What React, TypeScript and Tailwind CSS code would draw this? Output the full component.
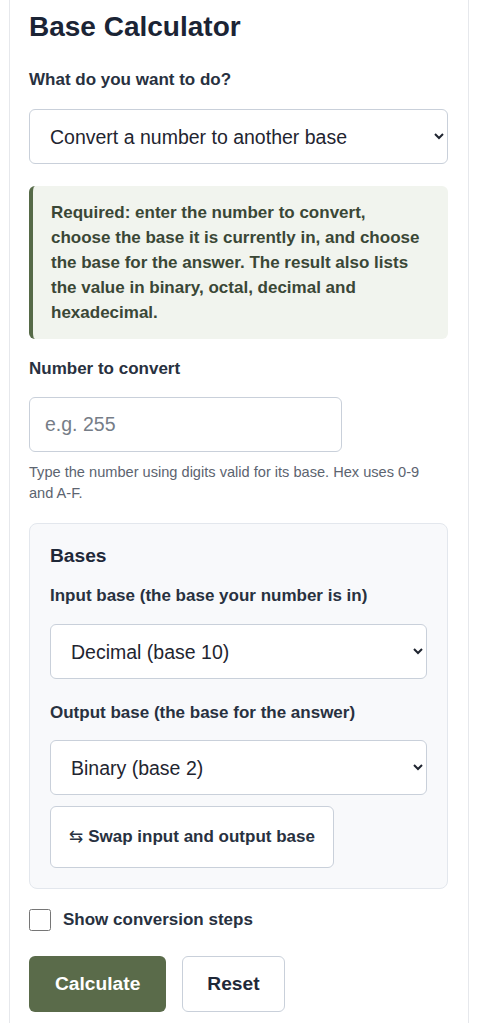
import React, { useState } from 'react';

const labelCls = 'block text-[17px] leading-[24px] font-bold text-[#283140]';
const selectCls =
  'block w-full h-[55px] rounded-[6px] border border-[#c9d0da] bg-white pl-[16px] pr-[12px] text-[19.5px] text-[#1f2530]';

const App: React.FC = () => {
  const [mode, setMode] = useState('convert');
  const [value, setValue] = useState('');
  const [fromBase, setFromBase] = useState('10');
  const [toBase, setToBase] = useState('2');
  const [showSteps, setShowSteps] = useState(false);

  const swap = () => {
    setFromBase(toBase);
    setToBase(fromBase);
  };

  const reset = () => {
    setValue('');
    setFromBase('10');
    setToBase('2');
    setShowSteps(false);
  };

  return (
    <div className="min-h-screen bg-white font-['Liberation_Sans',Arial,sans-serif]">
      <div className="ml-[9px] w-[460px] border-x border-[#e6e8ec] pl-[19px] pr-[20px] pt-[10px] pb-[40px]">
        <h1 className="text-[28px] leading-[34px] font-bold text-[#1b2435]">Base Calculator</h1>

        {/* Mode */}
        <label className={`${labelCls} mt-[24px]`}>What do you want to do?</label>
        <select className={`${selectCls} mt-[17px]`} value={mode} onChange={(e) => setMode(e.target.value)}>
          <option value="convert">Convert a number to another base</option>
          <option value="arith">Do arithmetic in a base</option>
        </select>

        <div className="mt-[22px] rounded-[6px] border-l-4 border-[#566a48] bg-[#f1f4ee] py-[14px] pl-[18px] pr-[22px]">
          <p className="text-[17px] leading-[25px] font-bold text-[#3a4736]">
            Required: enter the number to convert, choose the base it is currently in, and choose the base for the
            answer. The result also lists the value in binary, octal, decimal and hexadecimal.
          </p>
        </div>

        {/* Number */}
        <label className={`${labelCls} mt-[18px]`}>Number to convert</label>
        <input
          type="text"
          value={value}
          onChange={(e) => setValue(e.target.value)}
          placeholder="e.g. 255"
          className="mt-[16px] block h-[55px] w-[313px] rounded-[6px] border border-[#c9d0da] bg-white px-[15px] text-[19.5px] text-[#1f2530] placeholder:text-[#767d87]"
        />
        <p className="mt-[10px] max-w-[400px] text-[14.6px] leading-[21px] text-[#5c6470]">
          Type the number using digits valid for its base. Hex uses 0-9 and A-F.
        </p>

        {/* Bases */}
        <div className="mt-[19px] rounded-[8px] border border-[#e3e7ed] bg-[#f8f9fb] p-[20px]">
          <h2 className="text-[19.2px] leading-[24px] font-bold text-[#1f2838]">Bases</h2>

          <label className={`${labelCls} mt-[16px]`}>Input base (the base your number is in)</label>
          <select className={`${selectCls} mt-[16px]`} value={fromBase} onChange={(e) => setFromBase(e.target.value)}>
            <option value="2">Binary (base 2)</option>
            <option value="8">Octal (base 8)</option>
            <option value="10">Decimal (base 10)</option>
            <option value="16">Hexadecimal (base 16)</option>
          </select>

          <label className={`${labelCls} mt-[22px]`}>Output base (the base for the answer)</label>
          <select className={`${selectCls} mt-[15px]`} value={toBase} onChange={(e) => setToBase(e.target.value)}>
            <option value="2">Binary (base 2)</option>
            <option value="8">Octal (base 8)</option>
            <option value="10">Decimal (base 10)</option>
            <option value="16">Hexadecimal (base 16)</option>
          </select>

          <button
            type="button"
            onClick={swap}
            className="mt-[11px] flex h-[62px] w-[284px] items-center rounded-[6px] border border-[#c9d0da] bg-white px-[18px] text-[17px] font-bold text-[#283140]"
          >
            <span className="mr-[5px] font-['DejaVu_Sans',sans-serif] text-[17px] font-normal">⇆</span>
            Swap input and output base
          </button>
        </div>

        {/* Steps */}
        <label className="mt-[19px] flex items-center">
          <input
            type="checkbox"
            checked={showSteps}
            onChange={(e) => setShowSteps(e.target.checked)}
            className="m-0 h-[22px] w-[22px]"
          />
          <span className="ml-[12px] text-[17px] leading-[24px] font-bold text-[#283140]">Show conversion steps</span>
        </label>

        <div className="mt-[24px] flex items-center gap-[16px]">
          <button
            type="button"
            className="h-[56px] rounded-[6px] bg-[#5a6b4a] px-[26px] text-[19.2px] font-bold text-white"
          >
            Calculate
          </button>
          <button
            type="button"
            onClick={reset}
            className="h-[56px] rounded-[6px] border border-[#c9d0da] bg-white px-[24px] text-[19.2px] font-bold text-[#1f2838]"
          >
            Reset
          </button>
        </div>
      </div>
    </div>
  );
};

export default App;
